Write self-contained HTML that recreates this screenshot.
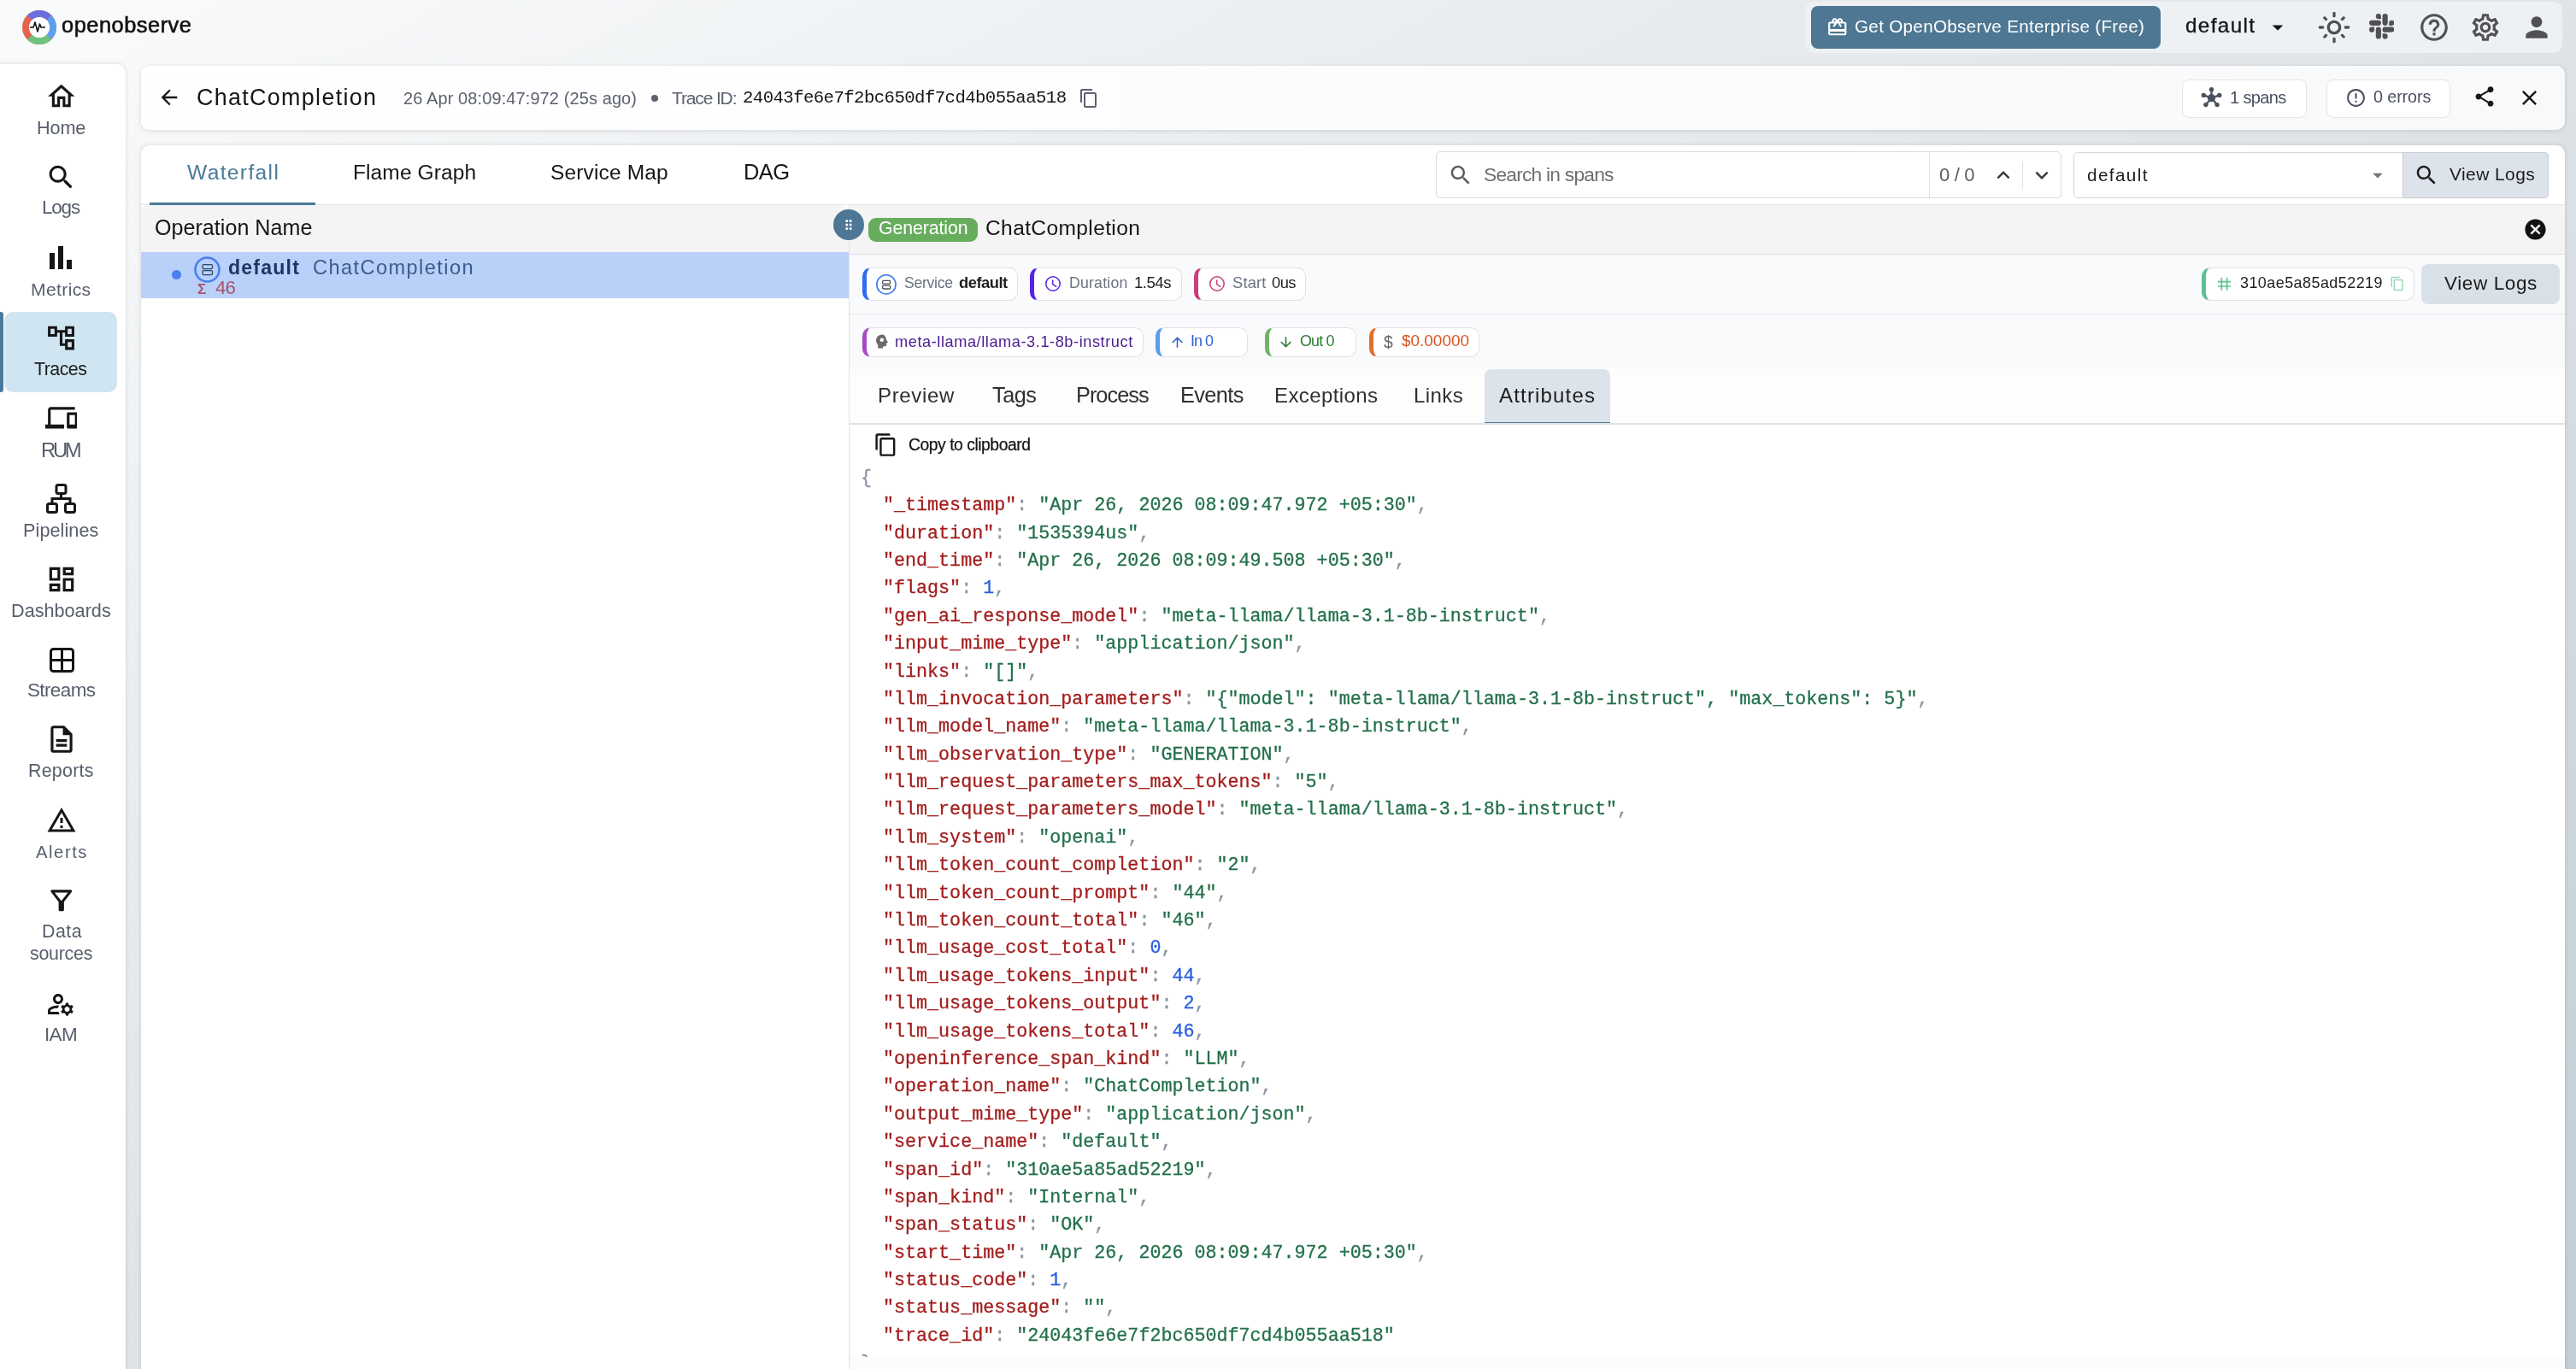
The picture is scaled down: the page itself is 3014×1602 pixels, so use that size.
<!DOCTYPE html>
<html><head><meta charset="utf-8"><title>OpenObserve</title>
<style>
html,body{margin:0;padding:0;width:3014px;height:1602px;overflow:hidden;background:#f3f5f7;}
.r{position:absolute;display:block;}
.t{will-change:transform;position:absolute;white-space:pre;font-family:"Liberation Sans",sans-serif;}
.m{font-family:"Liberation Mono",monospace;font-size:21.7px;line-height:21.7px;-webkit-text-stroke-width:0.3px;}
</style></head><body>
<div class="r" style="left:0px;top:0px;width:3014px;height:1602px;background:linear-gradient(to bottom right,#fafbfc 0%,#dfe4e8 50%,#c2cdd5 100%);"></div>
<svg class="r" style="left:26px;top:12px;" width="40" height="40" viewBox="0 0 40 40"><circle cx="20" cy="20" r="16" fill="none" stroke="#e0644f" stroke-width="8" /><path d="M20 4 A16 16 0 0 1 31.3 8.7" fill="none" stroke="#6b6fdc" stroke-width="8"/><path d="M8.7 8.7 A16 16 0 0 1 20 4" fill="none" stroke="#6b6fdc" stroke-width="8"/><path d="M31.3 8.7 A16 16 0 0 1 31.3 31.3" fill="none" stroke="#5aa0f0" stroke-width="8"/><path d="M31.3 31.3 A16 16 0 0 1 8.7 31.3" fill="none" stroke="#70c27f" stroke-width="8"/><circle cx="20" cy="20" r="12" fill="#fff"/><path d="M9 20h4l2-6 3 11 2.5-9 1.5 4h5" fill="none" stroke="#111" stroke-width="1.6" stroke-linejoin="round"/></svg>
<div class="t" style="left:72.00px;top:17.09px;font-size:25.40px;line-height:25.40px;font-family:'Liberation Sans',sans-serif;color:#111;letter-spacing:0.514px;-webkit-text-stroke:0.6px #111;">openobserve</div>
<div class="r" style="left:2112px;top:2px;width:886px;height:60px;background:#eef1f4;border-radius:10px;"></div>
<div class="r" style="left:2119px;top:7px;width:409px;height:50px;background:#4d7793;border-radius:8px;"></div>
<svg class="r" style="left:2137.25px;top:18.75px;" width="25.5" height="25.5" viewBox="0 0 24 24"><path d="M20 6h-2.18c.11-.31.18-.65.18-1 0-1.66-1.34-3-3-3-1.05 0-1.96.54-2.5 1.35l-.5.67-.5-.68C10.96 2.54 10.05 2 9 2 7.34 2 6 3.34 6 5c0 .35.07.69.18 1H4c-1.11 0-1.99.89-1.99 2L2 19c0 1.11.89 2 2 2h16c1.11 0 2-.89 2-2V8c0-1.11-.89-2-2-2zm-5-2c.55 0 1 .45 1 1s-.45 1-1 1-1-.45-1-1 .45-1 1-1zM9 4c.55 0 1 .45 1 1s-.45 1-1 1-1-.45-1-1 .45-1 1-1zm11 15H4v-2h16v2zm0-5H4V8h5.08L7 10.83 8.62 12 11 8.76l1-1.36 1 1.36L15.38 12 17 10.83 14.92 8H20v6z" fill="#ffffff"/></svg>
<div class="t" style="left:2170.00px;top:21.48px;font-size:20.69px;line-height:20.69px;font-family:'Liberation Sans',sans-serif;color:#ffffff;letter-spacing:0.281px;">Get OpenObserve Enterprise (Free)</div>
<div class="t" style="left:2557.00px;top:18.05px;font-size:24.28px;line-height:24.28px;font-family:'Liberation Sans',sans-serif;color:#151515;letter-spacing:1.354px;-webkit-text-stroke:0.35px #151515;">default</div>
<svg class="r" style="left:2650.0px;top:16.5px;" width="30" height="30" viewBox="0 0 24 24"><path d="M7 10l5 5 5-5z" fill="#151515"/></svg>
<svg class="r" style="left:2710.5px;top:11.5px;" width="40" height="40" viewBox="0 0 24 24"><path d="M12 9c1.65 0 3 1.35 3 3s-1.35 3-3 3-3-1.35-3-3 1.35-3 3-3m0-2c-2.76 0-5 2.24-5 5s2.24 5 5 5 5-2.24 5-5-2.24-5-5-5zM2 13h2c.55 0 1-.45 1-1s-.45-1-1-1H2c-.55 0-1 .45-1 1s.45 1 1 1zm18 0h2c.55 0 1-.45 1-1s-.45-1-1-1h-2c-.55 0-1 .45-1 1s.45 1 1 1zM11 2v2c0 .55.45 1 1 1s1-.45 1-1V2c0-.55-.45-1-1-1s-1 .45-1 1zm0 18v2c0 .55.45 1 1 1s1-.45 1-1v-2c0-.55-.45-1-1-1s-1 .45-1 1zM5.99 4.58c-.39-.39-1.03-.39-1.41 0-.39.39-.39 1.03 0 1.41l1.06 1.06c.39.39 1.03.39 1.41 0s.39-1.03 0-1.41L5.99 4.58zm12.37 12.37c-.39-.39-1.03-.39-1.41 0-.39.39-.39 1.03 0 1.41l1.06 1.06c.39.39 1.03.39 1.41 0 .39-.39.39-1.03 0-1.41l-1.06-1.06zm1.06-10.96c.39-.39.39-1.03 0-1.41-.39-.39-1.03-.39-1.41 0l-1.06 1.06c-.39.39-.39 1.03 0 1.41s1.03.39 1.41 0l1.06-1.06zM7.05 18.36c.39-.39.39-1.03 0-1.41-.39-.39-1.03-.39-1.41 0l-1.06 1.06c-.39.39-.39 1.03 0 1.41s1.03.39 1.41 0l1.06-1.06z" fill="#505055"/></svg>
<svg class="r" style="left:2771.5px;top:16px;" width="29.5" height="29.5" viewBox="0 0 24 24"><path d="M5.042 15.165a2.528 2.528 0 0 1-2.52 2.523A2.528 2.528 0 0 1 0 15.165a2.527 2.527 0 0 1 2.522-2.52h2.52v2.52zM6.313 15.165a2.527 2.527 0 0 1 2.521-2.52 2.527 2.527 0 0 1 2.521 2.52v6.313A2.528 2.528 0 0 1 8.834 24a2.528 2.528 0 0 1-2.521-2.522v-6.313zM8.834 5.042a2.528 2.528 0 0 1-2.521-2.52A2.528 2.528 0 0 1 8.834 0a2.528 2.528 0 0 1 2.521 2.522v2.52H8.834zM8.834 6.313a2.528 2.528 0 0 1 2.521 2.521 2.528 2.528 0 0 1-2.521 2.521H2.522A2.528 2.528 0 0 1 0 8.834a2.528 2.528 0 0 1 2.522-2.521h6.312zM18.956 8.834a2.528 2.528 0 0 1 2.522-2.521A2.528 2.528 0 0 1 24 8.834a2.528 2.528 0 0 1-2.522 2.521h-2.522V8.834zM17.688 8.834a2.528 2.528 0 0 1-2.523 2.521 2.527 2.527 0 0 1-2.52-2.521V2.522A2.527 2.527 0 0 1 15.165 0a2.528 2.528 0 0 1 2.523 2.522v6.312zM15.165 18.956a2.528 2.528 0 0 1 2.523 2.522A2.528 2.528 0 0 1 15.165 24a2.527 2.527 0 0 1-2.52-2.522v-2.522h2.52zM15.165 17.688a2.527 2.527 0 0 1-2.52-2.523 2.526 2.526 0 0 1 2.52-2.52h6.313A2.527 2.527 0 0 1 24 15.165a2.528 2.528 0 0 1-2.522 2.523h-6.313z" fill="#505055"/></svg>
<svg class="r" style="left:2828.5px;top:12.5px;" width="38" height="38" viewBox="0 0 24 24"><path d="M11 18h2v-2h-2v2zm1-16C6.48 2 2 6.48 2 12s4.48 10 10 10 10-4.48 10-10S17.52 2 12 2zm0 18c-4.41 0-8-3.59-8-8s3.59-8 8-8 8 3.59 8 8-3.59 8-8 8zm0-14c-2.21 0-4 1.79-4 4h2c0-1.1.9-2 2-2s2 .9 2 2c0 2-3 1.75-3 5h2c0-2.25 3-2.5 3-5 0-2.21-1.79-4-4-4z" fill="#505055"/></svg>
<svg class="r" style="left:2889.0px;top:12.5px;" width="38" height="38" viewBox="0 0 24 24"><path d="M19.43 12.98c.04-.32.07-.64.07-.98 0-.34-.03-.66-.07-.98l2.11-1.65c.19-.15.24-.42.12-.64l-2-3.46c-.09-.16-.26-.25-.44-.25-.06 0-.12.01-.17.03l-2.49 1c-.52-.4-1.08-.73-1.69-.98l-.38-2.65C14.46 2.18 14.25 2 14 2h-4c-.25 0-.46.18-.49.42l-.38 2.65c-.61.25-1.17.59-1.69.98l-2.49-1c-.06-.02-.12-.03-.18-.03-.17 0-.34.09-.43.25l-2 3.46c-.13.22-.07.49.12.64l2.11 1.65c-.04.32-.07.65-.07.98 0 .33.03.66.07.98l-2.11 1.65c-.19.15-.24.42-.12.64l2 3.46c.09.16.26.25.44.25.06 0 .12-.01.17-.03l2.49-1c.52.4 1.08.73 1.69.98l.38 2.65c.03.24.24.42.49.42h4c.25 0 .46-.18.49-.42l.38-2.65c.61-.25 1.17-.59 1.69-.98l2.49 1c.06.02.12.03.18.03.17 0 .34-.09.43-.25l2-3.46c.12-.22.07-.49-.12-.64l-2.11-1.65zm-1.98-1.71c.04.31.05.52.05.73 0 .21-.02.43-.05.73l-.14 1.13.89.7 1.08.84-.7 1.21-1.27-.51-1.04-.42-.9.68c-.43.32-.84.56-1.25.73l-1.06.43-.16 1.13-.2 1.35h-1.4l-.19-1.35-.16-1.13-1.06-.43c-.43-.18-.83-.41-1.23-.71l-.91-.7-1.06.43-1.27.51-.7-1.21 1.08-.84.89-.7-.14-1.13c-.03-.31-.05-.54-.05-.74s.02-.43.05-.73l.14-1.13-.89-.7-1.08-.84.7-1.21 1.27.51 1.04.42.9-.68c.43-.32.84-.56 1.25-.73l1.06-.43.16-1.13.2-1.35h1.39l.19 1.35.16 1.13 1.06.43c.43.18.83.41 1.23.71l.91.7 1.06-.43 1.27-.51.7 1.21-1.07.85-.89.7.14 1.13zM12 8c-2.21 0-4 1.79-4 4s1.79 4 4 4 4-1.79 4-4-1.79-4-4-4zm0 6c-1.1 0-2-.9-2-2s.9-2 2-2 2 .9 2 2-.9 2-2 2z" fill="#505055"/></svg>
<svg class="r" style="left:2949.0px;top:12.5px;" width="38" height="38" viewBox="0 0 24 24"><path d="M12 12c2.21 0 4-1.79 4-4s-1.79-4-4-4-4 1.79-4 4 1.79 4 4 4zm0 2c-2.67 0-8 1.34-8 4v2h16v-2c0-2.66-5.33-4-8-4z" fill="#505055"/></svg>
<div class="r" style="left:0px;top:75px;width:147px;height:1527px;background:#ffffff;border-top-right-radius:10px;box-shadow:0 0 5px 1px rgba(0,0,0,0.09);"></div>
<div class="r" style="left:5px;top:365px;width:132px;height:94px;background:#cfe5f1;border-radius:10px;"></div>
<div class="r" style="left:0px;top:365px;width:4px;height:94px;background:#4a7a99;border-radius:0 3px 3px 0;"></div>
<div class="t" style="left:42.90px;top:139.46px;font-size:21.66px;line-height:21.66px;font-family:'Liberation Sans',sans-serif;color:#585e6c;letter-spacing:-0.127px;">Home</div>
<svg class="r" style="left:52.75px;top:94.15px;" width="37.5" height="37.5" viewBox="0 0 24 24"><path d="M12 5.69l5 4.5V18h-2v-6H9v6H7v-7.81l5-4.5M12 3L2 12h3v8h6v-6h2v6h6v-8h3L12 3z" fill="#161616"/></svg>
<div class="t" style="left:48.80px;top:232.42px;font-size:22.53px;line-height:22.53px;font-family:'Liberation Sans',sans-serif;color:#585e6c;letter-spacing:-1.214px;">Logs</div>
<svg class="r" style="left:52.9px;top:189.4px;" width="37" height="37" viewBox="0 0 24 24"><path d="M15.5 14h-.79l-.28-.27C15.41 12.59 16 11.11 16 9.5 16 5.91 13.09 3 9.5 3S3 5.91 3 9.5 5.91 16 9.5 16c1.61 0 3.09-.59 4.23-1.57l.27.28v.79l5 4.99L20.49 19l-4.99-5zm-6 0C7.01 14 5 11.99 5 9.5S7.01 5 9.5 5 14 7.01 14 9.5 11.99 14 9.5 14z" fill="#161616"/></svg>
<div class="t" style="left:36.30px;top:328.13px;font-size:21.10px;line-height:21.10px;font-family:'Liberation Sans',sans-serif;color:#585e6c;letter-spacing:0.367px;">Metrics</div>
<div class="t" style="left:40.00px;top:421.61px;font-size:21.37px;line-height:21.37px;font-family:'Liberation Sans',sans-serif;color:#1c1c1c;letter-spacing:-0.521px;">Traces</div>
<svg class="r" style="left:53.0px;top:376.6px;" width="37" height="37" viewBox="0 0 24 24"><path d="M22 11V3h-7v3H9V3H2v8h7V8h2v10h4v3h7v-8h-7v3h-2V8h2v3h7zM7 9H4V5h3v4zm10 6h3v4h-3v-4zm0-10h3v4h-3V5z" fill="#161616"/></svg>
<div class="t" style="left:47.60px;top:514.52px;font-size:23.84px;line-height:23.84px;font-family:'Liberation Sans',sans-serif;color:#585e6c;letter-spacing:-3.289px;">RUM</div>
<svg class="r" style="left:52.6px;top:470.2px;" width="37.8" height="37.8" viewBox="0 0 24 24"><path d="M4 6h18V4H4c-1.1 0-2 .9-2 2v11H0v3h14v-3H4V6zm19 2h-6c-.55 0-1 .45-1 1v10c0 .55.45 1 1 1h6c.55 0 1-.45 1-1V9c0-.55-.45-1-1-1zm-1 9h-4v-7h4v7z" fill="#161616"/></svg>
<div class="t" style="left:27.30px;top:610.36px;font-size:21.66px;line-height:21.66px;font-family:'Liberation Sans',sans-serif;color:#585e6c;letter-spacing:0.065px;">Pipelines</div>
<div class="t" style="left:13.10px;top:703.96px;font-size:21.66px;line-height:21.66px;font-family:'Liberation Sans',sans-serif;color:#585e6c;letter-spacing:-0.007px;">Dashboards</div>
<svg class="r" style="left:52.75px;top:658.8px;" width="38" height="38" viewBox="0 0 24 24"><path d="M19 5v2h-4V5h4M9 5v6H5V5h4m10 8v6h-4v-6h4M9 17v2H5v-2h4M21 3h-8v6h8V3zM11 3H3v10h8V3zm10 8h-8v10h8V11zm-10 4H3v6h8v-6z" fill="#161616"/></svg>
<div class="t" style="left:31.80px;top:796.86px;font-size:22.49px;line-height:22.49px;font-family:'Liberation Sans',sans-serif;color:#585e6c;letter-spacing:-0.623px;">Streams</div>
<div class="t" style="left:32.90px;top:891.91px;font-size:21.37px;line-height:21.37px;font-family:'Liberation Sans',sans-serif;color:#585e6c;letter-spacing:0.283px;">Reports</div>
<svg class="r" style="left:52.5px;top:846.4px;" width="38" height="38" viewBox="0 0 24 24"><path d="M14 2H6c-1.1 0-1.99.9-1.99 2L4 20c0 1.1.89 2 1.99 2H18c1.1 0 2-.9 2-2V8l-6-6zm4 18H6V4h7v5h5v11z M8 12h8v2H8z M8 15.5h8v2H8z" fill="#161616"/></svg>
<div class="t" style="left:41.70px;top:986.53px;font-size:20.28px;line-height:20.28px;font-family:'Liberation Sans',sans-serif;color:#585e6c;letter-spacing:1.535px;">Alerts</div>
<svg class="r" style="left:53.6px;top:941.6px;" width="36" height="36" viewBox="0 0 24 24"><path d="M12 5.99L19.53 19H4.47L12 5.99M12 2L1 21h22L12 2zm1 14h-2v2h2v-2zm0-6h-2v4h2v-4z" fill="#161616"/></svg>
<div class="t" style="left:48.60px;top:1079.91px;font-size:21.37px;line-height:21.37px;font-family:'Liberation Sans',sans-serif;color:#585e6c;letter-spacing:0.518px;">Data</div>
<svg class="r" style="left:52.75px;top:1035.0px;" width="37.5" height="37.5" viewBox="0 0 24 24"><path d="M7 6h10l-5.01 6.3L7 6zm-2.75-.39C6.27 8.2 10 13 10 13v6c0 .55.45 1 1 1h2c.55 0 1-.45 1-1v-6s3.72-4.8 5.74-7.39c.51-.66.04-1.61-.79-1.61H5.04c-.83 0-1.3.95-.79 1.61z" fill="#161616"/></svg>
<div class="t" style="left:52.00px;top:1199.92px;font-size:22.53px;line-height:22.53px;font-family:'Liberation Sans',sans-serif;color:#585e6c;letter-spacing:-0.678px;">IAM</div>
<svg class="r" style="left:52.9px;top:1156.5px;" width="36" height="36" viewBox="0 0 24 24"><path d="M4 18v-.65c0-.34.16-.66.41-.81C6.1 15.53 8.03 15 10 15c.03 0 .05 0 .08.01.1-.7.3-1.37.59-1.98-.22-.02-.44-.03-.67-.03-2.42 0-4.68.67-6.61 1.82-.88.52-1.39 1.5-1.39 2.53V20h9.26c-.42-.6-.75-1.28-.97-2H4zM10 12c2.21 0 4-1.79 4-4s-1.79-4-4-4-4 1.79-4 4 1.79 4 4 4zm0-6c1.1 0 2 .9 2 2s-.9 2-2 2-2-.9-2-2 .9-2 2-2zM20.75 16c0-.22-.03-.42-.06-.63l1.14-1.01-1-1.73-1.45.49c-.32-.27-.68-.48-1.08-.63L18 11h-2l-.3 1.49c-.4.15-.76.36-1.08.63l-1.45-.49-1 1.73 1.14 1.01c-.03.21-.06.41-.06.63s.03.42.06.63l-1.14 1.01 1 1.73 1.45-.49c.32.27.68.48 1.08.63L16 21h2l.3-1.49c.4-.15.76-.36 1.08-.63l1.45.49 1-1.73-1.14-1.01c.03-.21.06-.41.06-.63zM17 18c-1.1 0-2-.9-2-2s.9-2 2-2 2 .9 2 2-.9 2-2 2z" fill="#161616"/></svg>
<div class="t" style="left:35.00px;top:1105.58px;font-size:21.40px;line-height:21.40px;font-family:'Liberation Sans',sans-serif;color:#585e6c;letter-spacing:-0.254px;">sources</div>
<svg class="r" style="left:57px;top:288px;" width="28" height="27" viewBox="0 0 28 27"><g fill="#161616"><rect x="1" y="8" width="6" height="19"/><rect x="11" y="0" width="6" height="27"/><rect x="21" y="16" width="6" height="11"/></g></svg>
<svg class="r" style="left:54px;top:566px;" width="35" height="35" viewBox="0 0 35 35"><g fill="none" stroke="#161616" stroke-width="3"><rect x="12" y="1.5" width="11" height="10" rx="2"/><rect x="1.5" y="23.5" width="11" height="10" rx="2"/><rect x="22.5" y="23.5" width="11" height="10" rx="2"/><path d="M17.5 11.5v6M7 23.5v-6h21v6"/></g></svg>
<svg class="r" style="left:57.5px;top:757.5px;" width="29" height="29" viewBox="0 0 29 29"><g fill="none" stroke="#161616" stroke-width="3"><rect x="1.5" y="1.5" width="26" height="26" rx="3"/><path d="M14.5 1.5v26M1.5 14.5h26"/></g></svg>
<div class="r" style="left:165px;top:77px;width:2836px;height:75px;background:linear-gradient(90deg,#ffffff 0%,#fcfcfd 60%,#f8f9fa 100%);border-radius:10px;box-shadow:0 1px 5px 1px rgba(0,0,0,0.09);"></div>
<svg class="r" style="left:183.5px;top:99.5px;" width="28" height="28" viewBox="0 0 24 24"><path d="M20 11H7.83l5.59-5.59L12 4l-8 8 8 8 1.41-1.41L7.83 13H20v-2z" fill="#161616"/></svg>
<div class="t" style="left:230.00px;top:101.23px;font-size:26.90px;line-height:26.90px;font-family:'Liberation Sans',sans-serif;color:#161616;letter-spacing:1.319px;">ChatCompletion</div>
<div class="t" style="left:472.00px;top:104.57px;font-size:20.00px;line-height:20.00px;font-family:'Liberation Sans',sans-serif;color:#5d6270;letter-spacing:0.100px;">26 Apr 08:09:47:972 (25s ago)</div>
<div class="r" style="left:762px;top:111px;width:8px;height:8px;background:#5d6270;border-radius:50%;"></div>
<div class="t" style="left:786.00px;top:103.66px;font-size:21.08px;line-height:21.08px;font-family:'Liberation Sans',sans-serif;color:#5d6270;letter-spacing:-1.173px;">Trace ID:</div>
<div class="t" style="left:868.50px;top:105.15px;font-size:20.69px;line-height:20.69px;font-family:'Liberation Mono',monospace;color:#161616;letter-spacing:-0.587px;">24043fe6e7f2bc650df7cd4b055aa518</div>
<svg class="r" style="left:1262.0px;top:102.5px;" width="24" height="24" viewBox="0 0 24 24"><path d="M16 1H4c-1.1 0-2 .9-2 2v14h2V3h12V1zm3 4H8c-1.1 0-2 .9-2 2v14c0 1.1.9 2 2 2h11c1.1 0 2-.9 2-2V7c0-1.1-.9-2-2-2zm0 16H8V7h11v14z" fill="#5d6270"/></svg>
<div class="r" style="left:2552.5px;top:92.5px;width:146px;height:45px;background:#fff;border:1px solid #e3e5e8;border-radius:8px;box-sizing:border-box;"></div>
<svg class="r" style="left:2575px;top:102px;" width="25" height="25" viewBox="0 0 25 25"><g fill="#4b5060" stroke="#4b5060"><circle cx="12.5" cy="12.7" r="4.6" stroke="none"/><path d="M12.5 12.7L12.5 2.8 M12.5 12.7L3.3 9.4 M12.5 12.7L21.8 9.4 M12.5 12.7L5.9 20.6 M12.5 12.7L19.1 20.6" stroke-width="2.4"/><circle cx="12.5" cy="2.8" r="2.7" stroke="none"/><circle cx="3.3" cy="9.4" r="2.7" stroke="none"/><circle cx="21.8" cy="9.4" r="2.7" stroke="none"/><circle cx="5.9" cy="20.6" r="2.7" stroke="none"/><circle cx="19.1" cy="20.6" r="2.7" stroke="none"/></g></svg>
<div class="t" style="left:2609.30px;top:103.62px;font-size:20.06px;line-height:20.06px;font-family:'Liberation Sans',sans-serif;color:#4b5060;letter-spacing:-0.641px;">1 spans</div>
<div class="r" style="left:2721.5px;top:92.5px;width:145px;height:45px;background:#fff;border:1px solid #e3e5e8;border-radius:8px;box-sizing:border-box;"></div>
<svg class="r" style="left:2743.5px;top:101.8px;" width="25" height="25" viewBox="0 0 24 24"><path d="M11 15h2v2h-2zm0-8h2v6h-2zm.99-5C6.47 2 2 6.48 2 12s4.47 10 9.99 10C17.52 22 22 17.52 22 12S17.52 2 11.99 2zM12 20c-4.42 0-8-3.58-8-8s3.58-8 8-8 8 3.58 8 8-3.58 8-8 8z" fill="#4b5060"/></svg>
<div class="t" style="left:2777.00px;top:103.86px;font-size:19.77px;line-height:19.77px;font-family:'Liberation Sans',sans-serif;color:#4b5060;letter-spacing:-0.116px;">0 errors</div>
<svg class="r" style="left:2893.0px;top:99.3px;" width="28" height="28" viewBox="0 0 24 24"><path d="M18 16.08c-.76 0-1.44.3-1.96.77L8.91 12.7c.05-.23.09-.46.09-.7s-.04-.47-.09-.7l7.05-4.11c.54.5 1.25.81 2.04.81 1.66 0 3-1.34 3-3s-1.34-3-3-3-3 1.34-3 3c0 .24.04.47.09.7L8.04 9.81C7.5 9.31 6.79 9 6 9c-1.66 0-3 1.34-3 3s1.34 3 3 3c.79 0 1.5-.31 2.04-.81l7.12 4.16c-.05.21-.08.43-.08.65 0 1.61 1.31 2.92 2.92 2.92 1.61 0 2.92-1.31 2.92-2.92s-1.31-2.92-2.92-2.92z" fill="#161616"/></svg>
<svg class="r" style="left:2945.0px;top:99.5px;" width="29" height="29" viewBox="0 0 24 24"><path d="M19 6.41L17.59 5 12 10.59 6.41 5 5 6.41 10.59 12 5 17.59 6.41 19 12 13.41 17.59 19 19 17.59 13.41 12z" fill="#161616"/></svg>
<div class="r" style="left:165px;top:170px;width:2836px;height:1432px;background:#ffffff;border-radius:10px 10px 0 0;box-shadow:0 0 5px 1px rgba(0,0,0,0.09);"></div>
<div class="t" style="left:219.00px;top:190.01px;font-size:24.55px;line-height:24.55px;font-family:'Liberation Sans',sans-serif;color:#4a7a99;letter-spacing:1.369px;">Waterfall</div>
<div class="t" style="left:412.70px;top:190.01px;font-size:24.55px;line-height:24.55px;font-family:'Liberation Sans',sans-serif;color:#161616;letter-spacing:0.084px;">Flame Graph</div>
<div class="t" style="left:644.00px;top:190.01px;font-size:24.55px;line-height:24.55px;font-family:'Liberation Sans',sans-serif;color:#161616;letter-spacing:0.134px;">Service Map</div>
<div class="t" style="left:870.00px;top:189.21px;font-size:25.50px;line-height:25.50px;font-family:'Liberation Sans',sans-serif;color:#161616;letter-spacing:-0.631px;">DAG</div>
<div class="r" style="left:165px;top:239px;width:2836px;height:1px;background:#e6e6e6;"></div>
<div class="r" style="left:175px;top:237px;width:194px;height:3px;background:#4a7a99;"></div>
<div class="r" style="left:1680px;top:177px;width:732px;height:55px;background:#fff;border:1px solid #dcdcdc;border-radius:5px;box-sizing:border-box;"></div>
<svg class="r" style="left:1694.0px;top:189.5px;" width="30" height="30" viewBox="0 0 24 24"><path d="M15.5 14h-.79l-.28-.27C15.41 12.59 16 11.11 16 9.5 16 5.91 13.09 3 9.5 3S3 5.91 3 9.5 5.91 16 9.5 16c1.61 0 3.09-.59 4.23-1.57l.27.28v.79l5 4.99L20.49 19l-4.99-5zm-6 0C7.01 14 5 11.99 5 9.5S7.01 5 9.5 5 14 7.01 14 9.5 11.99 14 9.5 14z" fill="#5c5c5c"/></svg>
<div class="t" style="left:1735.50px;top:193.23px;font-size:22.76px;line-height:22.76px;font-family:'Liberation Sans',sans-serif;color:#6e6e6e;letter-spacing:-0.764px;">Search in spans</div>
<div class="r" style="left:2257px;top:178px;width:1px;height:53px;background:#e0e0e0;"></div>
<div class="t" style="left:2269.00px;top:193.81px;font-size:22.07px;line-height:22.07px;font-family:'Liberation Sans',sans-serif;color:#5c5c5c;letter-spacing:-0.362px;">0 / 0</div>
<svg class="r" style="left:2329.0px;top:190.0px;" width="30" height="30" viewBox="0 0 24 24"><path d="M12 8l-6 6 1.41 1.41L12 10.83l4.59 4.58L18 14z" fill="#3a3a3a"/></svg>
<div class="r" style="left:2366px;top:189px;width:1px;height:32px;background:#e0e0e0;"></div>
<svg class="r" style="left:2373.5px;top:190.0px;" width="30" height="30" viewBox="0 0 24 24"><path d="M16.59 8.59L12 13.17 7.41 8.59 6 10l6 6 6-6z" fill="#3a3a3a"/></svg>
<div class="r" style="left:2426px;top:178px;width:556px;height:54px;background:#fff;border:1px solid #d6d6d6;border-radius:5px;box-sizing:border-box;"></div>
<div class="t" style="left:2442.00px;top:195.48px;font-size:20.69px;line-height:20.69px;font-family:'Liberation Sans',sans-serif;color:#1c1c1c;letter-spacing:1.398px;">default</div>
<svg class="r" style="left:2767.5px;top:191.0px;" width="28" height="28" viewBox="0 0 24 24"><path d="M7 10l5 5 5-5z" fill="#777777"/></svg>
<div class="r" style="left:2811px;top:178px;width:171px;height:54px;background:#dce3ea;border:1px solid #c9ced4;border-left:1px solid #c9ced4;border-radius:0 5px 5px 0;box-sizing:border-box;"></div>
<svg class="r" style="left:2824.0px;top:189.5px;" width="30" height="30" viewBox="0 0 24 24"><path d="M15.5 14h-.79l-.28-.27C15.41 12.59 16 11.11 16 9.5 16 5.91 13.09 3 9.5 3S3 5.91 3 9.5 5.91 16 9.5 16c1.61 0 3.09-.59 4.23-1.57l.27.28v.79l5 4.99L20.49 19l-4.99-5zm-6 0C7.01 14 5 11.99 5 9.5S7.01 5 9.5 5 14 7.01 14 9.5 11.99 14 9.5 14z" fill="#1c1c1c"/></svg>
<div class="t" style="left:2866.00px;top:194.45px;font-size:20.97px;line-height:20.97px;font-family:'Liberation Sans',sans-serif;color:#1c1c1c;letter-spacing:0.418px;">View Logs</div>
<div class="r" style="left:165px;top:240px;width:828px;height:55px;background:#f4f4f4;border-radius:8px 10px 0 0;"></div>
<div class="t" style="left:180.60px;top:254.14px;font-size:25.10px;line-height:25.10px;font-family:'Liberation Sans',sans-serif;color:#161616;letter-spacing:0.017px;">Operation Name</div>
<div class="r" style="left:165px;top:295px;width:828px;height:54px;background:#b9d1f9;"></div>
<div class="r" style="left:201px;top:316px;width:11px;height:11px;background:#4a80ef;border-radius:50%;"></div>
<svg class="r" style="left:227px;top:300px;" width="31" height="31" viewBox="0 0 31 31"><circle cx="15.5" cy="15.5" r="14" fill="none" stroke="#4a80ef" stroke-width="2.6"/><rect x="10" y="9.6" width="11.5" height="5" rx="1.4" fill="none" stroke="#2d4470" stroke-width="1.3"/><rect x="10" y="16.6" width="11.5" height="5" rx="1.4" fill="none" stroke="#2d4470" stroke-width="1.3"/></svg>
<div class="t" style="left:267.00px;top:301.98px;font-size:23.17px;line-height:23.17px;font-family:'Liberation Sans',sans-serif;font-weight:700;color:#1e3665;letter-spacing:1.173px;">default</div>
<div class="t" style="left:366.00px;top:301.63px;font-size:23.59px;line-height:23.59px;font-family:'Liberation Sans',sans-serif;color:#3d5b8a;letter-spacing:1.422px;">ChatCompletion</div>
<div class="t" style="left:231.00px;top:330.08px;font-size:17.15px;line-height:17.15px;font-family:'Liberation Sans',sans-serif;font-weight:700;color:#a8566f;letter-spacing:0.000px;">Σ</div>
<div class="t" style="left:252.00px;top:325.68px;font-size:22.35px;line-height:22.35px;font-family:'Liberation Sans',sans-serif;color:#a8566f;letter-spacing:-0.853px;">46</div>
<div class="r" style="left:993px;top:240px;width:1px;height:1362px;background:#e2e2e2;"></div>
<div class="r" style="left:994px;top:240px;width:2007px;height:57px;background:#f4f4f4;"></div>
<div class="r" style="left:994px;top:297px;width:2007px;height:1px;background:#dedede;"></div>
<div class="r" style="left:994px;top:298px;width:2007px;height:134px;background:#f9fafc;"></div>
<div class="r" style="left:994px;top:367px;width:2007px;height:1px;background:#e8eaed;"></div>
<div class="r" style="left:975px;top:245px;width:36px;height:36px;background:#4e7795;border-radius:50%;"></div>
<svg class="r" style="left:987px;top:256px;" width="12" height="14" viewBox="0 0 12 14"><g fill="#fff"><circle cx="3.8" cy="2.5" r="1.5"/><circle cx="8.2" cy="2.5" r="1.5"/><circle cx="3.8" cy="7" r="1.5"/><circle cx="8.2" cy="7" r="1.5"/><circle cx="3.8" cy="11.5" r="1.5"/><circle cx="8.2" cy="11.5" r="1.5"/></g></svg>
<div class="r" style="left:1016px;top:255px;width:128px;height:28px;background:#68ac5e;border-radius:9px;"></div>
<div class="t" style="left:1027.50px;top:257.41px;font-size:21.24px;line-height:21.24px;font-family:'Liberation Sans',sans-serif;color:#ffffff;letter-spacing:-0.067px;">Generation</div>
<div class="t" style="left:1152.50px;top:255.31px;font-size:24.55px;line-height:24.55px;font-family:'Liberation Sans',sans-serif;color:#161616;letter-spacing:0.374px;">ChatCompletion</div>
<svg class="r" style="left:2951.5px;top:254.1px;" width="29" height="29" viewBox="0 0 24 24"><path d="M12 2C6.47 2 2 6.47 2 12s4.47 10 10 10 10-4.47 10-10S17.53 2 12 2zm5 13.59L15.59 17 12 13.41 8.41 17 7 15.59 10.59 12 7 8.41 8.41 7 12 10.59 15.59 7 17 8.41 13.41 12 17 15.59z" fill="#111111"/></svg>
<div class="r" style="left:1009px;top:313px;width:182px;height:38.5px;background:#fff;border:1px solid #dfe1e5;border-left:5px solid #2f6cf0;border-radius:10px;box-sizing:border-box;"></div>
<svg class="r" style="left:1025px;top:320.5px;" width="24" height="24" viewBox="0 0 24 24"><circle cx="11.9" cy="11.9" r="11.1" fill="none" stroke="#3b78e8" stroke-width="1.6"/><rect x="7.6" y="7.4" width="9" height="3.8" rx="1" fill="none" stroke="#4a4f58" stroke-width="1.3"/><rect x="7.6" y="13.2" width="9" height="3.8" rx="1" fill="none" stroke="#4a4f58" stroke-width="1.3"/></svg>
<div class="t" style="left:1057.50px;top:322.85px;font-size:17.66px;line-height:17.66px;font-family:'Liberation Sans',sans-serif;color:#6b7280;letter-spacing:-0.313px;">Service</div>
<div class="t" style="left:1121.80px;top:322.27px;font-size:18.34px;line-height:18.34px;font-family:'Liberation Sans',sans-serif;font-weight:700;color:#1f1f1f;letter-spacing:-0.489px;">default</div>
<div class="r" style="left:1205px;top:313px;width:178px;height:38.5px;background:#fff;border:1px solid #dfe1e5;border-left:5px solid #5b21e6;border-radius:10px;box-sizing:border-box;"></div>
<svg class="r" style="left:1222px;top:322px;" width="20" height="20" viewBox="0 0 20 20"><circle cx="10" cy="10" r="8.2" fill="none" stroke="#5b21e6" stroke-width="1.55"/><path d="M9.7 5.9v4.8l4.1 2.6" fill="none" stroke="#5b21e6" stroke-width="1.5" stroke-linecap="round"/></svg>
<div class="t" style="left:1250.70px;top:322.85px;font-size:17.66px;line-height:17.66px;font-family:'Liberation Sans',sans-serif;color:#6b7280;letter-spacing:0.223px;">Duration</div>
<div class="t" style="left:1326.50px;top:322.05px;font-size:18.60px;line-height:18.60px;font-family:'Liberation Sans',sans-serif;color:#1f1f1f;letter-spacing:-0.502px;">1.54s</div>
<div class="r" style="left:1397px;top:313px;width:131px;height:38.5px;background:#fff;border:1px solid #dfe1e5;border-left:5px solid #c93f7a;border-radius:10px;box-sizing:border-box;"></div>
<svg class="r" style="left:1413.5px;top:322px;" width="20" height="20" viewBox="0 0 20 20"><circle cx="10" cy="10" r="8.2" fill="none" stroke="#c93f7a" stroke-width="1.55"/><path d="M9.7 5.9v4.8l4.1 2.6" fill="none" stroke="#c93f7a" stroke-width="1.5" stroke-linecap="round"/></svg>
<div class="t" style="left:1442.00px;top:322.27px;font-size:18.34px;line-height:18.34px;font-family:'Liberation Sans',sans-serif;color:#6b7280;letter-spacing:0.167px;">Start</div>
<div class="t" style="left:1487.50px;top:322.27px;font-size:18.34px;line-height:18.34px;font-family:'Liberation Sans',sans-serif;color:#1f1f1f;letter-spacing:-0.531px;">0us</div>
<div class="r" style="left:2576px;top:313px;width:249px;height:38.5px;background:#fff;border:1px solid #dfe1e5;border-left:5px solid #5cc092;border-radius:10px;box-sizing:border-box;"></div>
<svg class="r" style="left:2595px;top:325px;" width="15" height="14.5" viewBox="0 0 15 14.5"><g stroke="#5cc092" stroke-width="1.7"><path d="M4.3 0v14.5M10.6 0v14.5M0 4.6h15M0 10h15"/></g></svg>
<div class="t" style="left:2620.80px;top:323.02px;font-size:17.93px;line-height:17.93px;font-family:'Liberation Sans',sans-serif;color:#1f1f1f;letter-spacing:0.469px;">310ae5a85ad52219</div>
<svg class="r" style="left:2796.0px;top:323.0px;" width="18" height="18" viewBox="0 0 24 24"><path d="M16 1H4c-1.1 0-2 .9-2 2v14h2V3h12V1zm3 4H8c-1.1 0-2 .9-2 2v14c0 1.1.9 2 2 2h11c1.1 0 2-.9 2-2V7c0-1.1-.9-2-2-2zm0 16H8V7h11v14z" fill="#9bd8b8"/></svg>
<div class="r" style="left:2833px;top:309px;width:162px;height:47px;background:#d9e1e8;border-radius:8px;"></div>
<div class="t" style="left:2859.60px;top:320.96px;font-size:22.48px;line-height:22.48px;font-family:'Liberation Sans',sans-serif;color:#1c1c1c;letter-spacing:0.634px;">View Logs</div>
<div class="r" style="left:1009px;top:382.5px;width:329px;height:35px;background:#fff;border:1px solid #dfe1e5;border-left:5px solid #a64bc4;border-radius:10px;box-sizing:border-box;"></div>
<svg class="r" style="left:1023.5px;top:391px;" width="16" height="17" viewBox="0 0 16 17"><path d="M8.5 0.5C4.2 0.5 1 3.6 1 7.6c0 1.9.8 3.5 2.2 4.8V16.5h6v-2.2h2.2c1 0 1.8-.8 1.8-1.8V10h2l-2.2-3.6C12.5 3 10.8 .5 8.5 .5z" fill="#6b6b6b"/><circle cx="7.8" cy="6.8" r="2.3" fill="#fff"/></svg>
<div class="t" style="left:1047.20px;top:390.58px;font-size:18.21px;line-height:18.21px;font-family:'Liberation Sans',sans-serif;color:#4a1d8f;letter-spacing:0.563px;">meta-llama/llama-3.1-8b-instruct</div>
<div class="r" style="left:1352px;top:382.5px;width:108px;height:35px;background:#fff;border:1px solid #dfe1e5;border-left:5px solid #5b9cf0;border-radius:10px;box-sizing:border-box;"></div>
<svg class="r" style="left:1367.5px;top:390.5px;" width="19" height="19" viewBox="0 0 24 24"><path d="M4 12l1.41 1.41L11 7.83V20h2V7.83l5.58 5.59L20 12l-8-8-8 8z" fill="#2c62d0"/></svg>
<div class="t" style="left:1393.00px;top:390.84px;font-size:17.91px;line-height:17.91px;font-family:'Liberation Sans',sans-serif;color:#2c62d0;letter-spacing:-0.957px;">In 0</div>
<div class="r" style="left:1480px;top:382.5px;width:107px;height:35px;background:#fff;border:1px solid #dfe1e5;border-left:5px solid #6fb36a;border-radius:10px;box-sizing:border-box;"></div>
<svg class="r" style="left:1495.0px;top:390.5px;" width="19" height="19" viewBox="0 0 24 24"><path d="M20 12l-1.41-1.41L13 16.17V4h-2v12.17l-5.58-5.59L4 12l8 8 8-8z" fill="#2e7d32"/></svg>
<div class="t" style="left:1521.00px;top:390.84px;font-size:17.91px;line-height:17.91px;font-family:'Liberation Sans',sans-serif;color:#2e7d32;letter-spacing:-0.826px;">Out 0</div>
<div class="r" style="left:1602px;top:382.5px;width:129px;height:35px;background:#fff;border:1px solid #dfe1e5;border-left:5px solid #e0702a;border-radius:10px;box-sizing:border-box;"></div>
<div class="t" style="left:1618.50px;top:391.24px;font-size:19.32px;line-height:19.32px;font-family:'Liberation Sans',sans-serif;color:#666666;letter-spacing:0.000px;">$</div>
<div class="t" style="left:1640.00px;top:389.98px;font-size:18.92px;line-height:18.92px;font-family:'Liberation Sans',sans-serif;color:#d9541e;letter-spacing:0.013px;">$0.00000</div>
<div class="r" style="left:994px;top:432px;width:2007px;height:64px;background:#fdfdfd;"></div>
<div class="r" style="left:1737px;top:432px;width:147px;height:63px;background:#dce3ea;border-radius:8px 8px 0 0;"></div>
<div class="r" style="left:994px;top:495px;width:2007px;height:2px;background:#e2e2e2;"></div>
<div class="r" style="left:1737px;top:494px;width:147px;height:1px;background:#4a7a99;"></div>
<div class="t" style="left:1027.00px;top:450.68px;font-size:24.00px;line-height:24.00px;font-family:'Liberation Sans',sans-serif;color:#2f2f2f;letter-spacing:0.660px;">Preview</div>
<div class="t" style="left:1161.00px;top:449.59px;font-size:25.29px;line-height:25.29px;font-family:'Liberation Sans',sans-serif;color:#2f2f2f;letter-spacing:-0.471px;">Tags</div>
<div class="t" style="left:1259.00px;top:449.59px;font-size:25.29px;line-height:25.29px;font-family:'Liberation Sans',sans-serif;color:#2f2f2f;letter-spacing:-0.958px;">Process</div>
<div class="t" style="left:1380.70px;top:449.59px;font-size:25.29px;line-height:25.29px;font-family:'Liberation Sans',sans-serif;color:#2f2f2f;letter-spacing:-0.603px;">Events</div>
<div class="t" style="left:1491.00px;top:450.68px;font-size:24.00px;line-height:24.00px;font-family:'Liberation Sans',sans-serif;color:#2f2f2f;letter-spacing:0.399px;">Exceptions</div>
<div class="t" style="left:1654.00px;top:450.68px;font-size:24.00px;line-height:24.00px;font-family:'Liberation Sans',sans-serif;color:#2f2f2f;letter-spacing:0.421px;">Links</div>
<div class="t" style="left:1754.00px;top:450.68px;font-size:24.00px;line-height:24.00px;font-family:'Liberation Sans',sans-serif;color:#1c1c1c;letter-spacing:1.180px;">Attributes</div>
<svg class="r" style="left:1022.0px;top:505.5px;" width="29" height="29" viewBox="0 0 24 24"><path d="M16 1H4c-1.1 0-2 .9-2 2v14h2V3h12V1zm3 4H8c-1.1 0-2 .9-2 2v14c0 1.1.9 2 2 2h11c1.1 0 2-.9 2-2V7c0-1.1-.9-2-2-2zm0 16H8V7h11v14z" fill="#161616"/></svg>
<div class="t" style="left:1063.00px;top:511.35px;font-size:19.31px;line-height:19.31px;font-family:'Liberation Sans',sans-serif;color:#161616;letter-spacing:-0.455px;-webkit-text-stroke:0.25px #161616;">Copy to clipboard</div>
<div class="t m" style="left:1007.0px;top:548.79px;"><span style="color:#8d95a3">{</span></div>
<div class="t m" style="left:1007.0px;top:581.18px;">  <span style="color:#a31d1d">&quot;_timestamp&quot;</span><span style="color:#8d95a3">: </span><span style="color:#22704a">&quot;Apr 26, 2026 08:09:47.972 +05:30&quot;</span><span style="color:#8d95a3">,</span></div>
<div class="t m" style="left:1007.0px;top:613.57px;">  <span style="color:#a31d1d">&quot;duration&quot;</span><span style="color:#8d95a3">: </span><span style="color:#22704a">&quot;1535394us&quot;</span><span style="color:#8d95a3">,</span></div>
<div class="t m" style="left:1007.0px;top:645.96px;">  <span style="color:#a31d1d">&quot;end_time&quot;</span><span style="color:#8d95a3">: </span><span style="color:#22704a">&quot;Apr 26, 2026 08:09:49.508 +05:30&quot;</span><span style="color:#8d95a3">,</span></div>
<div class="t m" style="left:1007.0px;top:678.35px;">  <span style="color:#a31d1d">&quot;flags&quot;</span><span style="color:#8d95a3">: </span><span style="color:#2a5de0">1</span><span style="color:#8d95a3">,</span></div>
<div class="t m" style="left:1007.0px;top:710.74px;">  <span style="color:#a31d1d">&quot;gen_ai_response_model&quot;</span><span style="color:#8d95a3">: </span><span style="color:#22704a">&quot;meta-llama/llama-3.1-8b-instruct&quot;</span><span style="color:#8d95a3">,</span></div>
<div class="t m" style="left:1007.0px;top:743.13px;">  <span style="color:#a31d1d">&quot;input_mime_type&quot;</span><span style="color:#8d95a3">: </span><span style="color:#22704a">&quot;application/json&quot;</span><span style="color:#8d95a3">,</span></div>
<div class="t m" style="left:1007.0px;top:775.52px;">  <span style="color:#a31d1d">&quot;links&quot;</span><span style="color:#8d95a3">: </span><span style="color:#22704a">&quot;[]&quot;</span><span style="color:#8d95a3">,</span></div>
<div class="t m" style="left:1007.0px;top:807.91px;">  <span style="color:#a31d1d">&quot;llm_invocation_parameters&quot;</span><span style="color:#8d95a3">: </span><span style="color:#22704a">&quot;{&quot;model&quot;: &quot;meta-llama/llama-3.1-8b-instruct&quot;, &quot;max_tokens&quot;: 5}&quot;</span><span style="color:#8d95a3">,</span></div>
<div class="t m" style="left:1007.0px;top:840.30px;">  <span style="color:#a31d1d">&quot;llm_model_name&quot;</span><span style="color:#8d95a3">: </span><span style="color:#22704a">&quot;meta-llama/llama-3.1-8b-instruct&quot;</span><span style="color:#8d95a3">,</span></div>
<div class="t m" style="left:1007.0px;top:872.69px;">  <span style="color:#a31d1d">&quot;llm_observation_type&quot;</span><span style="color:#8d95a3">: </span><span style="color:#22704a">&quot;GENERATION&quot;</span><span style="color:#8d95a3">,</span></div>
<div class="t m" style="left:1007.0px;top:905.08px;">  <span style="color:#a31d1d">&quot;llm_request_parameters_max_tokens&quot;</span><span style="color:#8d95a3">: </span><span style="color:#22704a">&quot;5&quot;</span><span style="color:#8d95a3">,</span></div>
<div class="t m" style="left:1007.0px;top:937.47px;">  <span style="color:#a31d1d">&quot;llm_request_parameters_model&quot;</span><span style="color:#8d95a3">: </span><span style="color:#22704a">&quot;meta-llama/llama-3.1-8b-instruct&quot;</span><span style="color:#8d95a3">,</span></div>
<div class="t m" style="left:1007.0px;top:969.86px;">  <span style="color:#a31d1d">&quot;llm_system&quot;</span><span style="color:#8d95a3">: </span><span style="color:#22704a">&quot;openai&quot;</span><span style="color:#8d95a3">,</span></div>
<div class="t m" style="left:1007.0px;top:1002.25px;">  <span style="color:#a31d1d">&quot;llm_token_count_completion&quot;</span><span style="color:#8d95a3">: </span><span style="color:#22704a">&quot;2&quot;</span><span style="color:#8d95a3">,</span></div>
<div class="t m" style="left:1007.0px;top:1034.64px;">  <span style="color:#a31d1d">&quot;llm_token_count_prompt&quot;</span><span style="color:#8d95a3">: </span><span style="color:#22704a">&quot;44&quot;</span><span style="color:#8d95a3">,</span></div>
<div class="t m" style="left:1007.0px;top:1067.03px;">  <span style="color:#a31d1d">&quot;llm_token_count_total&quot;</span><span style="color:#8d95a3">: </span><span style="color:#22704a">&quot;46&quot;</span><span style="color:#8d95a3">,</span></div>
<div class="t m" style="left:1007.0px;top:1099.42px;">  <span style="color:#a31d1d">&quot;llm_usage_cost_total&quot;</span><span style="color:#8d95a3">: </span><span style="color:#2a5de0">0</span><span style="color:#8d95a3">,</span></div>
<div class="t m" style="left:1007.0px;top:1131.81px;">  <span style="color:#a31d1d">&quot;llm_usage_tokens_input&quot;</span><span style="color:#8d95a3">: </span><span style="color:#2a5de0">44</span><span style="color:#8d95a3">,</span></div>
<div class="t m" style="left:1007.0px;top:1164.20px;">  <span style="color:#a31d1d">&quot;llm_usage_tokens_output&quot;</span><span style="color:#8d95a3">: </span><span style="color:#2a5de0">2</span><span style="color:#8d95a3">,</span></div>
<div class="t m" style="left:1007.0px;top:1196.59px;">  <span style="color:#a31d1d">&quot;llm_usage_tokens_total&quot;</span><span style="color:#8d95a3">: </span><span style="color:#2a5de0">46</span><span style="color:#8d95a3">,</span></div>
<div class="t m" style="left:1007.0px;top:1228.98px;">  <span style="color:#a31d1d">&quot;openinference_span_kind&quot;</span><span style="color:#8d95a3">: </span><span style="color:#22704a">&quot;LLM&quot;</span><span style="color:#8d95a3">,</span></div>
<div class="t m" style="left:1007.0px;top:1261.37px;">  <span style="color:#a31d1d">&quot;operation_name&quot;</span><span style="color:#8d95a3">: </span><span style="color:#22704a">&quot;ChatCompletion&quot;</span><span style="color:#8d95a3">,</span></div>
<div class="t m" style="left:1007.0px;top:1293.76px;">  <span style="color:#a31d1d">&quot;output_mime_type&quot;</span><span style="color:#8d95a3">: </span><span style="color:#22704a">&quot;application/json&quot;</span><span style="color:#8d95a3">,</span></div>
<div class="t m" style="left:1007.0px;top:1326.15px;">  <span style="color:#a31d1d">&quot;service_name&quot;</span><span style="color:#8d95a3">: </span><span style="color:#22704a">&quot;default&quot;</span><span style="color:#8d95a3">,</span></div>
<div class="t m" style="left:1007.0px;top:1358.54px;">  <span style="color:#a31d1d">&quot;span_id&quot;</span><span style="color:#8d95a3">: </span><span style="color:#22704a">&quot;310ae5a85ad52219&quot;</span><span style="color:#8d95a3">,</span></div>
<div class="t m" style="left:1007.0px;top:1390.93px;">  <span style="color:#a31d1d">&quot;span_kind&quot;</span><span style="color:#8d95a3">: </span><span style="color:#22704a">&quot;Internal&quot;</span><span style="color:#8d95a3">,</span></div>
<div class="t m" style="left:1007.0px;top:1423.32px;">  <span style="color:#a31d1d">&quot;span_status&quot;</span><span style="color:#8d95a3">: </span><span style="color:#22704a">&quot;OK&quot;</span><span style="color:#8d95a3">,</span></div>
<div class="t m" style="left:1007.0px;top:1455.71px;">  <span style="color:#a31d1d">&quot;start_time&quot;</span><span style="color:#8d95a3">: </span><span style="color:#22704a">&quot;Apr 26, 2026 08:09:47.972 +05:30&quot;</span><span style="color:#8d95a3">,</span></div>
<div class="t m" style="left:1007.0px;top:1488.10px;">  <span style="color:#a31d1d">&quot;status_code&quot;</span><span style="color:#8d95a3">: </span><span style="color:#2a5de0">1</span><span style="color:#8d95a3">,</span></div>
<div class="t m" style="left:1007.0px;top:1520.49px;">  <span style="color:#a31d1d">&quot;status_message&quot;</span><span style="color:#8d95a3">: </span><span style="color:#22704a">&quot;&quot;</span><span style="color:#8d95a3">,</span></div>
<div class="t m" style="left:1007.0px;top:1552.88px;">  <span style="color:#a31d1d">&quot;trace_id&quot;</span><span style="color:#8d95a3">: </span><span style="color:#22704a">&quot;24043fe6e7f2bc650df7cd4b055aa518&quot;</span></div>
<div class="t m" style="left:1007.0px;top:1585.27px;"><span style="color:#8d95a3">}</span></div>
<div class="r" style="left:994px;top:1588px;width:2007px;height:14px;background:#fbfcfc;"></div>
</body></html>
